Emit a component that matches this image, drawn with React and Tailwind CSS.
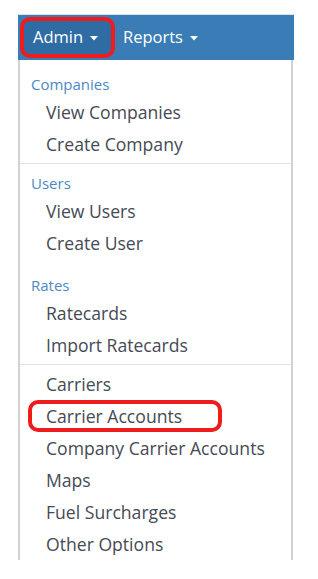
import React from "react";

const font = { fontFamily: '"Open Sans", "Noto Sans", sans-serif' };

function Caret() {
  return (
    <svg width="8" height="5" viewBox="0 0 8 5" className="ml-[7px] mt-[2px]">
      <path d="M0 0 L8 0 L4 4.5 Z" fill="#ffffff" />
    </svg>
  );
}

function Header({ children, className = "" }) {
  return (
    <div className={`h-[24px] flex items-center pl-[11px] text-[15px] text-[#4d87c5] ${className}`}>
      {children}
    </div>
  );
}

function Item({ children }) {
  return (
    <div className="h-[32px] flex items-center pl-[26px] text-[17.6px] text-[#454a54]">
      {children}
    </div>
  );
}

export default function App() {
  return (
    <div className="min-h-screen bg-white pt-[14px] pl-[18px]" style={font}>
      <div className="w-[276px]">
        <div className="h-[46px] bg-[#3a7cb5] flex items-center pl-[2px] border-t border-[#d8e2ea]">
          <div className="h-[41px] w-[95px] border-4 border-[#ee1c1c] rounded-[10px] bg-[#2f6ca3] flex items-center pl-[9px] text-[16.5px] text-white">
            Admin
            <Caret />
          </div>
          <div className="flex items-center ml-[8px] text-[16.5px] text-white">
            Reports
            <Caret />
          </div>
        </div>

        <div className="w-[275px] h-[500px] border-x-2 border-[#d2d2d2] bg-white pt-[12px] flex flex-col">
          <Header>Companies</Header>
          <Item>View Companies</Item>
          <Item>Create Company</Item>
          <div className="mt-[3px] mb-[7px] h-px bg-[#e2e2e2]" />
          <Header>Users</Header>
          <Item>View Users</Item>
          <Item>Create User</Item>
          <Header className="mt-[14px]">Rates</Header>
          <Item>Ratecards</Item>
          <Item>Import Ratecards</Item>
          <div className="mt-[3px] mb-[3px] h-px bg-[#e2e2e2]" />
          <Item>Carriers</Item>
          <div className="h-[32px] w-[194px] ml-[8px] border-4 border-[#ee1c1c] rounded-[10px] flex items-center pl-[14px] text-[17.6px] text-[#454a54]">
            Carrier Accounts
          </div>
          <Item>Company Carrier Accounts</Item>
          <Item>Maps</Item>
          <Item>Fuel Surcharges</Item>
          <Item>Other Options</Item>
        </div>
      </div>
    </div>
  );
}
